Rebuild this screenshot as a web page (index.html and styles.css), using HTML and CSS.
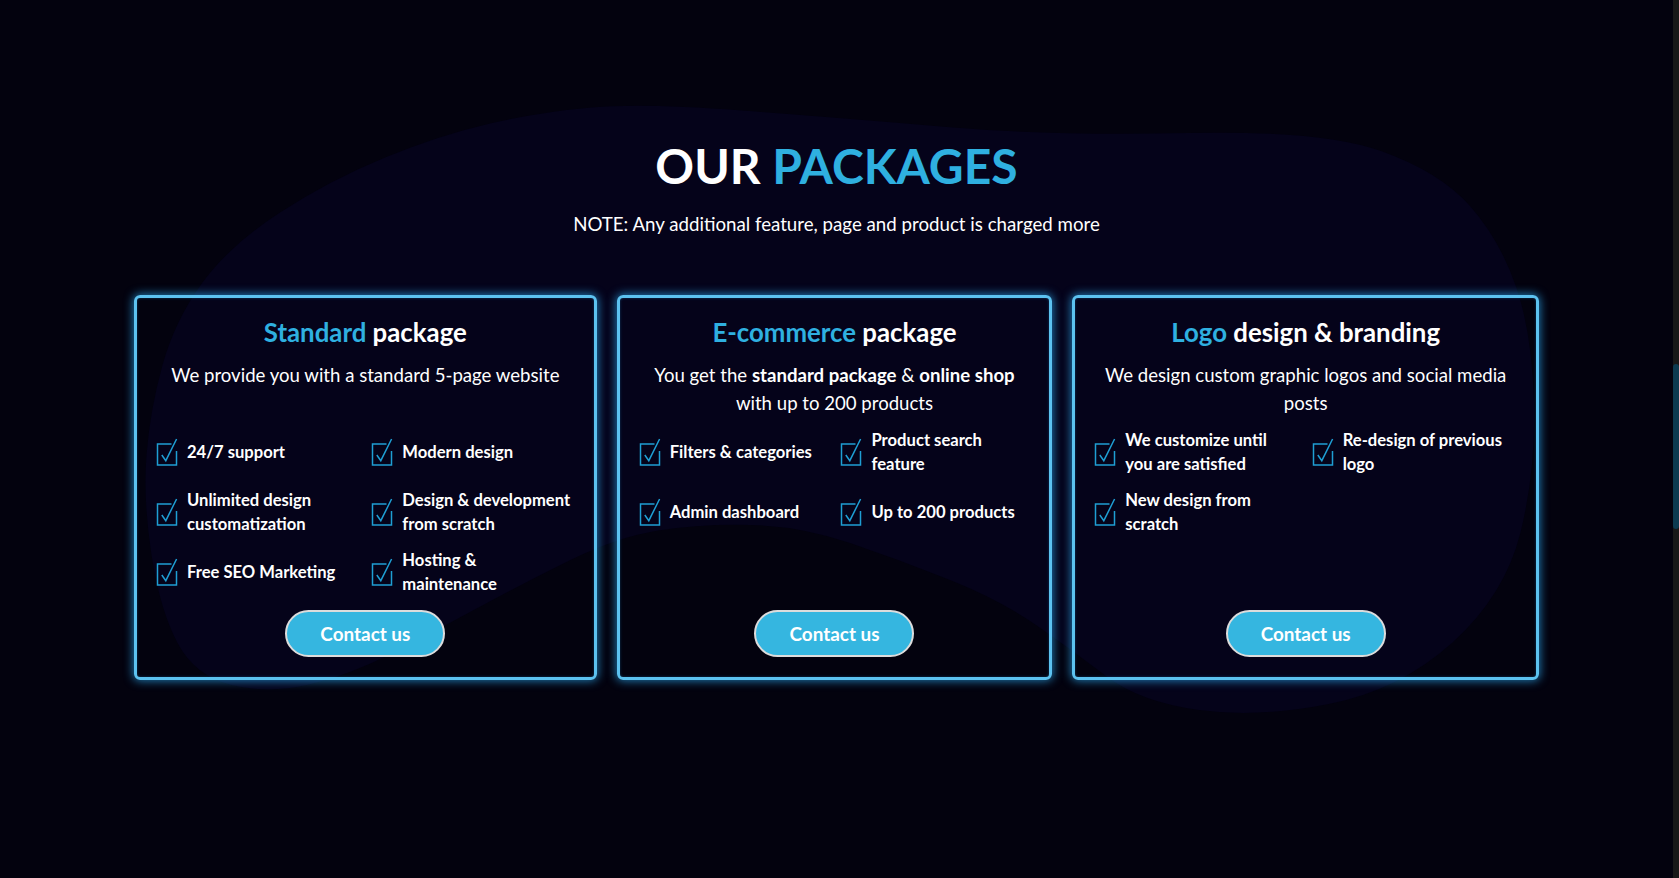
FILE: index.html
```html
<!DOCTYPE html>
<html lang="en">
<head>
<meta charset="utf-8">
<title>Our Packages</title>
<link rel="stylesheet" href="styles.css">
</head>
<body>
<div class="page">
  <svg class="blob" viewBox="0 0 1673 878" preserveAspectRatio="none" aria-hidden="true">
    <path d="M 591.5 107.5 Q 643 103 741.5 110.5 Q 840 118 947 127 Q 1054 136 1188 133 Q 1322 130 1381 151 Q 1440 172 1470 206 Q 1500 240 1516 286.5 Q 1532 333 1534 401.5 Q 1536 470 1520.5 532.5 Q 1505 595 1452.5 642.5 Q 1400 690 1329 704 Q 1258 718 1199 710 Q 1140 702 1106 676 Q 1072 650 1036 625 Q 1000 600 950 580 Q 900 560 850 543 Q 800 526 750 525 Q 700 524 658.5 530.5 Q 617 537 568.5 561 Q 520 585 478.5 607.5 Q 437 630 393.5 652.5 Q 350 675 309 684.5 Q 268 694 231.5 685 Q 195 676 177.5 643 Q 160 610 151.5 555 Q 143 500 146.5 455 Q 150 410 162.5 365 Q 175 320 202.5 282.5 Q 230 245 280 212.5 Q 330 180 385 157.5 Q 440 135 490 123.5 Q 540 112 591.5 107.5 Z" fill="#05031a"/>
  </svg>

  <section class="packages">
    <h1 class="heading">OUR <span class="accent">PACKAGES</span></h1>
    <p class="note">NOTE: Any additional feature, page and product is charged more</p>

    <div class="cards">
      <article class="card">
        <h2 class="card-title"><span class="accent">Standard</span> package</h2>
        <p class="card-desc">We provide you with a standard 5-page website</p>
        <ul class="features">
          <li class="feature"><svg class="check" viewBox="0 0 22 28" width="22" height="28"><path d="M15.5 6 H1.5 V27 H20.5 V13"/><path d="M5.8 17 L9.8 22.7 L20.6 1"/></svg><span>24/7 support</span></li>
          <li class="feature"><svg class="check" viewBox="0 0 22 28" width="22" height="28"><path d="M15.5 6 H1.5 V27 H20.5 V13"/><path d="M5.8 17 L9.8 22.7 L20.6 1"/></svg><span>Modern design</span></li>
          <li class="feature"><svg class="check" viewBox="0 0 22 28" width="22" height="28"><path d="M15.5 6 H1.5 V27 H20.5 V13"/><path d="M5.8 17 L9.8 22.7 L20.6 1"/></svg><span>Unlimited design<br>customatization</span></li>
          <li class="feature"><svg class="check" viewBox="0 0 22 28" width="22" height="28"><path d="M15.5 6 H1.5 V27 H20.5 V13"/><path d="M5.8 17 L9.8 22.7 L20.6 1"/></svg><span>Design &amp; development<br>from scratch</span></li>
          <li class="feature"><svg class="check" viewBox="0 0 22 28" width="22" height="28"><path d="M15.5 6 H1.5 V27 H20.5 V13"/><path d="M5.8 17 L9.8 22.7 L20.6 1"/></svg><span>Free SEO Marketing</span></li>
          <li class="feature"><svg class="check" viewBox="0 0 22 28" width="22" height="28"><path d="M15.5 6 H1.5 V27 H20.5 V13"/><path d="M5.8 17 L9.8 22.7 L20.6 1"/></svg><span>Hosting &amp;<br>maintenance</span></li>
        </ul>
        <button class="btn" type="button">Contact us</button>
      </article>

      <article class="card">
        <h2 class="card-title"><span class="accent">E-commerce</span> package</h2>
        <p class="card-desc">You get the <strong>standard package</strong> &amp; <strong>online shop</strong><br>with up to 200 products</p>
        <ul class="features">
          <li class="feature"><svg class="check" viewBox="0 0 22 28" width="22" height="28"><path d="M15.5 6 H1.5 V27 H20.5 V13"/><path d="M5.8 17 L9.8 22.7 L20.6 1"/></svg><span>Filters &amp; categories</span></li>
          <li class="feature"><svg class="check" viewBox="0 0 22 28" width="22" height="28"><path d="M15.5 6 H1.5 V27 H20.5 V13"/><path d="M5.8 17 L9.8 22.7 L20.6 1"/></svg><span>Product search<br>feature</span></li>
          <li class="feature"><svg class="check" viewBox="0 0 22 28" width="22" height="28"><path d="M15.5 6 H1.5 V27 H20.5 V13"/><path d="M5.8 17 L9.8 22.7 L20.6 1"/></svg><span>Admin dashboard</span></li>
          <li class="feature"><svg class="check" viewBox="0 0 22 28" width="22" height="28"><path d="M15.5 6 H1.5 V27 H20.5 V13"/><path d="M5.8 17 L9.8 22.7 L20.6 1"/></svg><span>Up to 200 products</span></li>
        </ul>
        <button class="btn" type="button">Contact us</button>
      </article>

      <article class="card">
        <h2 class="card-title"><span class="accent">Logo</span> design &amp; branding</h2>
        <p class="card-desc">We design custom graphic logos and social media<br>posts</p>
        <ul class="features">
          <li class="feature"><svg class="check" viewBox="0 0 22 28" width="22" height="28"><path d="M15.5 6 H1.5 V27 H20.5 V13"/><path d="M5.8 17 L9.8 22.7 L20.6 1"/></svg><span>We customize until<br>you are satisfied</span></li>
          <li class="feature"><svg class="check" viewBox="0 0 22 28" width="22" height="28"><path d="M15.5 6 H1.5 V27 H20.5 V13"/><path d="M5.8 17 L9.8 22.7 L20.6 1"/></svg><span>Re-design of previous<br>logo</span></li>
          <li class="feature"><svg class="check" viewBox="0 0 22 28" width="22" height="28"><path d="M15.5 6 H1.5 V27 H20.5 V13"/><path d="M5.8 17 L9.8 22.7 L20.6 1"/></svg><span>New design from<br>scratch</span></li>
        </ul>
        <button class="btn" type="button">Contact us</button>
      </article>
    </div>
  </section>
</div>
<div class="scrollbar"><div class="thumb"></div></div>
</body>
</html>
```

FILE: styles.css
```css
html, body {
  margin: 0;
  padding: 0;
}

body {
  background: #03020e;
  color: #ffffff;
  font-family: Lato, "Liberation Sans", sans-serif;
  height: 878px;
  overflow: hidden;
  display: flex;
}

.page {
  flex: 1;
  position: relative;
  height: 878px;
}

.blob {
  position: absolute;
  left: 0;
  top: 0;
  width: 100%;
  height: 100%;
  z-index: 0;
}

.packages {
  position: relative;
  z-index: 1;
  padding-top: 137px;
}

.heading {
  margin: 0;
  text-align: center;
  font-size: 48px;
  line-height: 1.2;
  font-weight: 700;
}

.accent {
  color: #2fb0e0;
}

.note {
  margin: 19px 0 0;
  text-align: center;
  font-size: 18.7px;
  line-height: 21.6px;
}

.cards {
  display: grid;
  grid-template-columns: 462fr 435fr 466fr;
  gap: 20px;
  width: 1405px;
  margin: 60px auto 0;
}

.card {
  border: 3px solid #5cc2f0;
  border-radius: 6px;
  box-shadow: 0 0 10px 1px rgba(40, 160, 230, 0.75), inset 0 0 3px rgba(40, 160, 230, 0.35);
  padding: 18px 19px 20px;
  display: flex;
  flex-direction: column;
}

.card-title {
  margin: 0;
  text-align: center;
  font-size: 25.8px;
  line-height: 32px;
  font-weight: 700;
}

.card-desc {
  margin: 13px 0 0;
  text-align: center;
  font-size: 18.6px;
  line-height: 28px;
  min-height: 56px;
}

.card-desc strong {
  font-weight: 700;
}

.features {
  list-style: none;
  margin: 11px 0 14px;
  padding: 0 3px 0 0;
  display: grid;
  grid-template-columns: 1fr 1fr;
  column-gap: 15px;
  row-gap: 12px;
  font-size: 16.6px;
  line-height: 24px;
  font-weight: 700;
}

.feature {
  display: flex;
  align-items: center;
  gap: 9px;
  min-height: 48px;
  white-space: nowrap;
}

.check {
  flex: none;
  fill: none;
  stroke: #1f9ed3;
  stroke-width: 1.5;
}

.btn {
  margin-top: auto;
  align-self: center;
  width: 160px;
  height: 47px;
  box-sizing: border-box;
  border: 2px solid #dcdcdc;
  border-radius: 24px;
  background: #35b6e0;
  color: #ffffff;
  font-family: Lato, "Liberation Sans", sans-serif;
  font-size: 18.9px;
  font-weight: 700;
  cursor: pointer;
}

.scrollbar {
  width: 6px;
  height: 878px;
  background: #181818;
}

.thumb {
  margin-top: 364px;
  height: 165px;
  background: #0c3a50;
  border-radius: 3px;
}
```
